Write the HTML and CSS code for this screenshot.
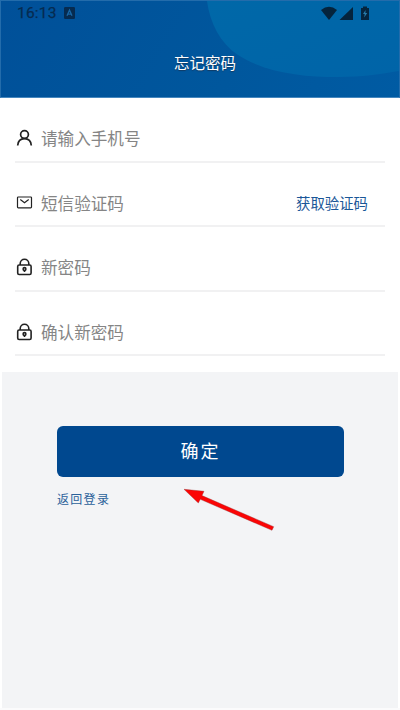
FILE: index.html
```html
<!DOCTYPE html>
<html lang="zh-CN">
<head>
<meta charset="utf-8">
<title>忘记密码</title>
<link rel="stylesheet" href="styles.css">
</head>
<body>
<main class="screen">
  <header class="header">
    <svg class="wave" width="192" height="80" viewBox="0 0 192 80"><defs><linearGradient id="sea" x1="0" y1="0" x2="1" y2="1"><stop offset="0" stop-color="#0068a8"/><stop offset="1" stop-color="#0064a8"/></linearGradient></defs><path d="M0 0C3 22 13 42 31 54C59 72 96 76 131 76C154 76 174 73 192 70V0Z" fill="url(#sea)"/></svg>
    <div class="status">
      <span class="clock">16:13</span>
      <svg class="badge" width="11" height="12" viewBox="0 0 11 12"><rect width="11" height="12" rx="1.3" fill="#062b50"/><path d="M3 8.800 5.500 3.200 8 8.800M4 7.200H7" fill="none" stroke="#1766a5" stroke-width="1.300"/></svg>
      <svg class="signals" width="49" height="15" viewBox="0 0 49 15"><path d="M0 4Q8-2.500 16 4L8 14Z"/><path d="M18.500 14 32 1V14Z"/><path d="M40 2H42V.5H46V2H48V14H40Z"/><path d="m44.600 4-2.600 4h1.700l-.5 3.500 3-4.400h-1.800Z" fill="#287ba9"/></svg>
    </div>
    <h1 class="title">忘记密码</h1>
  </header>
  <form class="form">
    <label class="row">
      <svg class="icon" width="17" height="18" viewBox="0 0 17 18"><circle cx="8.500" cy="5.500" r="3.900"/><path d="M1.700 16.500C2 12 4.500 9.700 8.500 9.700s6.500 2.300 6.800 6.800"/></svg>
      <span class="hint">请输入手机号</span>
    </label>
    <label class="row">
      <svg class="icon thin" width="17" height="18" viewBox="0 0 17 18"><rect x="1.500" y="3" width="14" height="10.800" rx=".8"/><path d="m4.300 5.600 4.200 3.200 4.200-3.200"/></svg>
      <span class="hint">短信验证码</span>
      <a class="code">获取验证码</a>
    </label>
    <label class="row">
      <svg class="icon lock" width="17" height="18" viewBox="0 0 17 18"><rect x="1.700" y="7" width="13.400" height="9.500" rx="1.400"/><path d="M4.200 7V5.500a4.300 4.300 0 0 1 8.600 0V7M8.500 12.500V14"/><circle cx="8.500" cy="11" r="1.400"/></svg>
      <span class="hint">新密码</span>
    </label>
    <label class="row">
      <svg class="icon lock" width="17" height="18" viewBox="0 0 17 18"><rect x="1.700" y="7" width="13.400" height="9.500" rx="1.400"/><path d="M4.200 7V5.500a4.300 4.300 0 0 1 8.600 0V7M8.500 12.500V14"/><circle cx="8.500" cy="11" r="1.400"/></svg>
      <span class="hint">确认新密码</span>
    </label>
  </form>
  <section class="actions">
    <button class="submit" type="button">确定</button>
    <a class="back">返回登录</a>
    <svg class="arrow" width="92" height="44" viewBox="0 0 92 44"><path d="M1 1.300 21 3.300 19 7.600 90.700 38.700 89 42.300 17.300 11.300 15.300 15Z"/></svg>
  </section>
</main>
</body>
</html>
```

FILE: styles.css
```css
* { box-sizing: border-box; }
body {
  margin: 0;
  background: #fff;
  font-family: Roboto, "Noto Sans CJK SC", sans-serif;
}
.screen {
  position: relative;
  width: 400px;
  height: 710px;
  overflow: hidden;
  display: flex;
  flex-direction: column;
  border-bottom: 2px solid #fbfbfc;
}
.header {
  position: relative;
  height: 98px;
  flex: none;
  border: 1px solid #236cab;
  border-bottom-color: #4687be;
  background: linear-gradient(120deg, #005099, #00579d 60%, #005ba3);
}
.wave {
  position: absolute;
  top: 0;
  right: 0;
}
.status {
  position: relative;
  height: 26px;
  padding: 0 29px 2px 16px;
  display: flex;
  align-items: center;
}
.clock {
  font-size: 15.500px;
  letter-spacing: .2px;
  color: #062b50;
  -webkit-text-stroke: .25px #062b50;
}
.badge { margin: 0 0 0 7px; }
.signals {
  margin-left: auto;
  fill: #05243d;
}
.title {
  position: relative;
  margin: 25px 0 0;
  padding-left: 10px;
  font-size: 15.500px;
  line-height: 25px;
  font-weight: 400;
  text-align: center;
  color: #fff;
  text-shadow: 0 1px 1px #123a62;
}
.form {
  height: 274px;
  flex: none;
  padding: 0 15px;
}
.row {
  height: 64.500px;
  padding: 18px 1px 0;
  display: flex;
  align-items: center;
  border-bottom: 2px solid #f1f1f2;
}
.icon {
  flex: none;
  fill: none;
  stroke: #222;
  stroke-width: 1.700;
}
.thin { stroke-width: 1.200; }
.lock { stroke-width: 1.600; }
.hint {
  margin-left: 8px;
  padding-top: 4px;
  font-size: 16.600px;
  line-height: 24px;
  font-weight: 400;
  color: #858585;
}
.code {
  margin: 0 16px 0 auto;
  font-size: 14.400px;
  color: #1a5798;
}
.actions {
  position: relative;
  flex: 1;
  margin: 0 2px;
  padding: 53.500px 54px 0 55px;
  background: #f3f4f6;
  display: flex;
  flex-direction: column;
  align-items: flex-start;
}
.submit {
  width: 287px;
  height: 51px;
  padding: 0 0 2px;
  border: 0;
  border-radius: 6px;
  background: #00488f;
  color: #fff;
  font: 400 18px Roboto, "Noto Sans CJK SC", sans-serif;
  letter-spacing: 2px;
}
.back {
  margin-top: 14px;
  font-size: 12px;
  line-height: 18px;
  letter-spacing: 1.300px;
  color: #2a619a;
}
.arrow {
  position: absolute;
  left: 181px;
  top: 116px;
  fill: #fb0505;
  stroke: #953234;
  stroke-width: .4;
}
```
